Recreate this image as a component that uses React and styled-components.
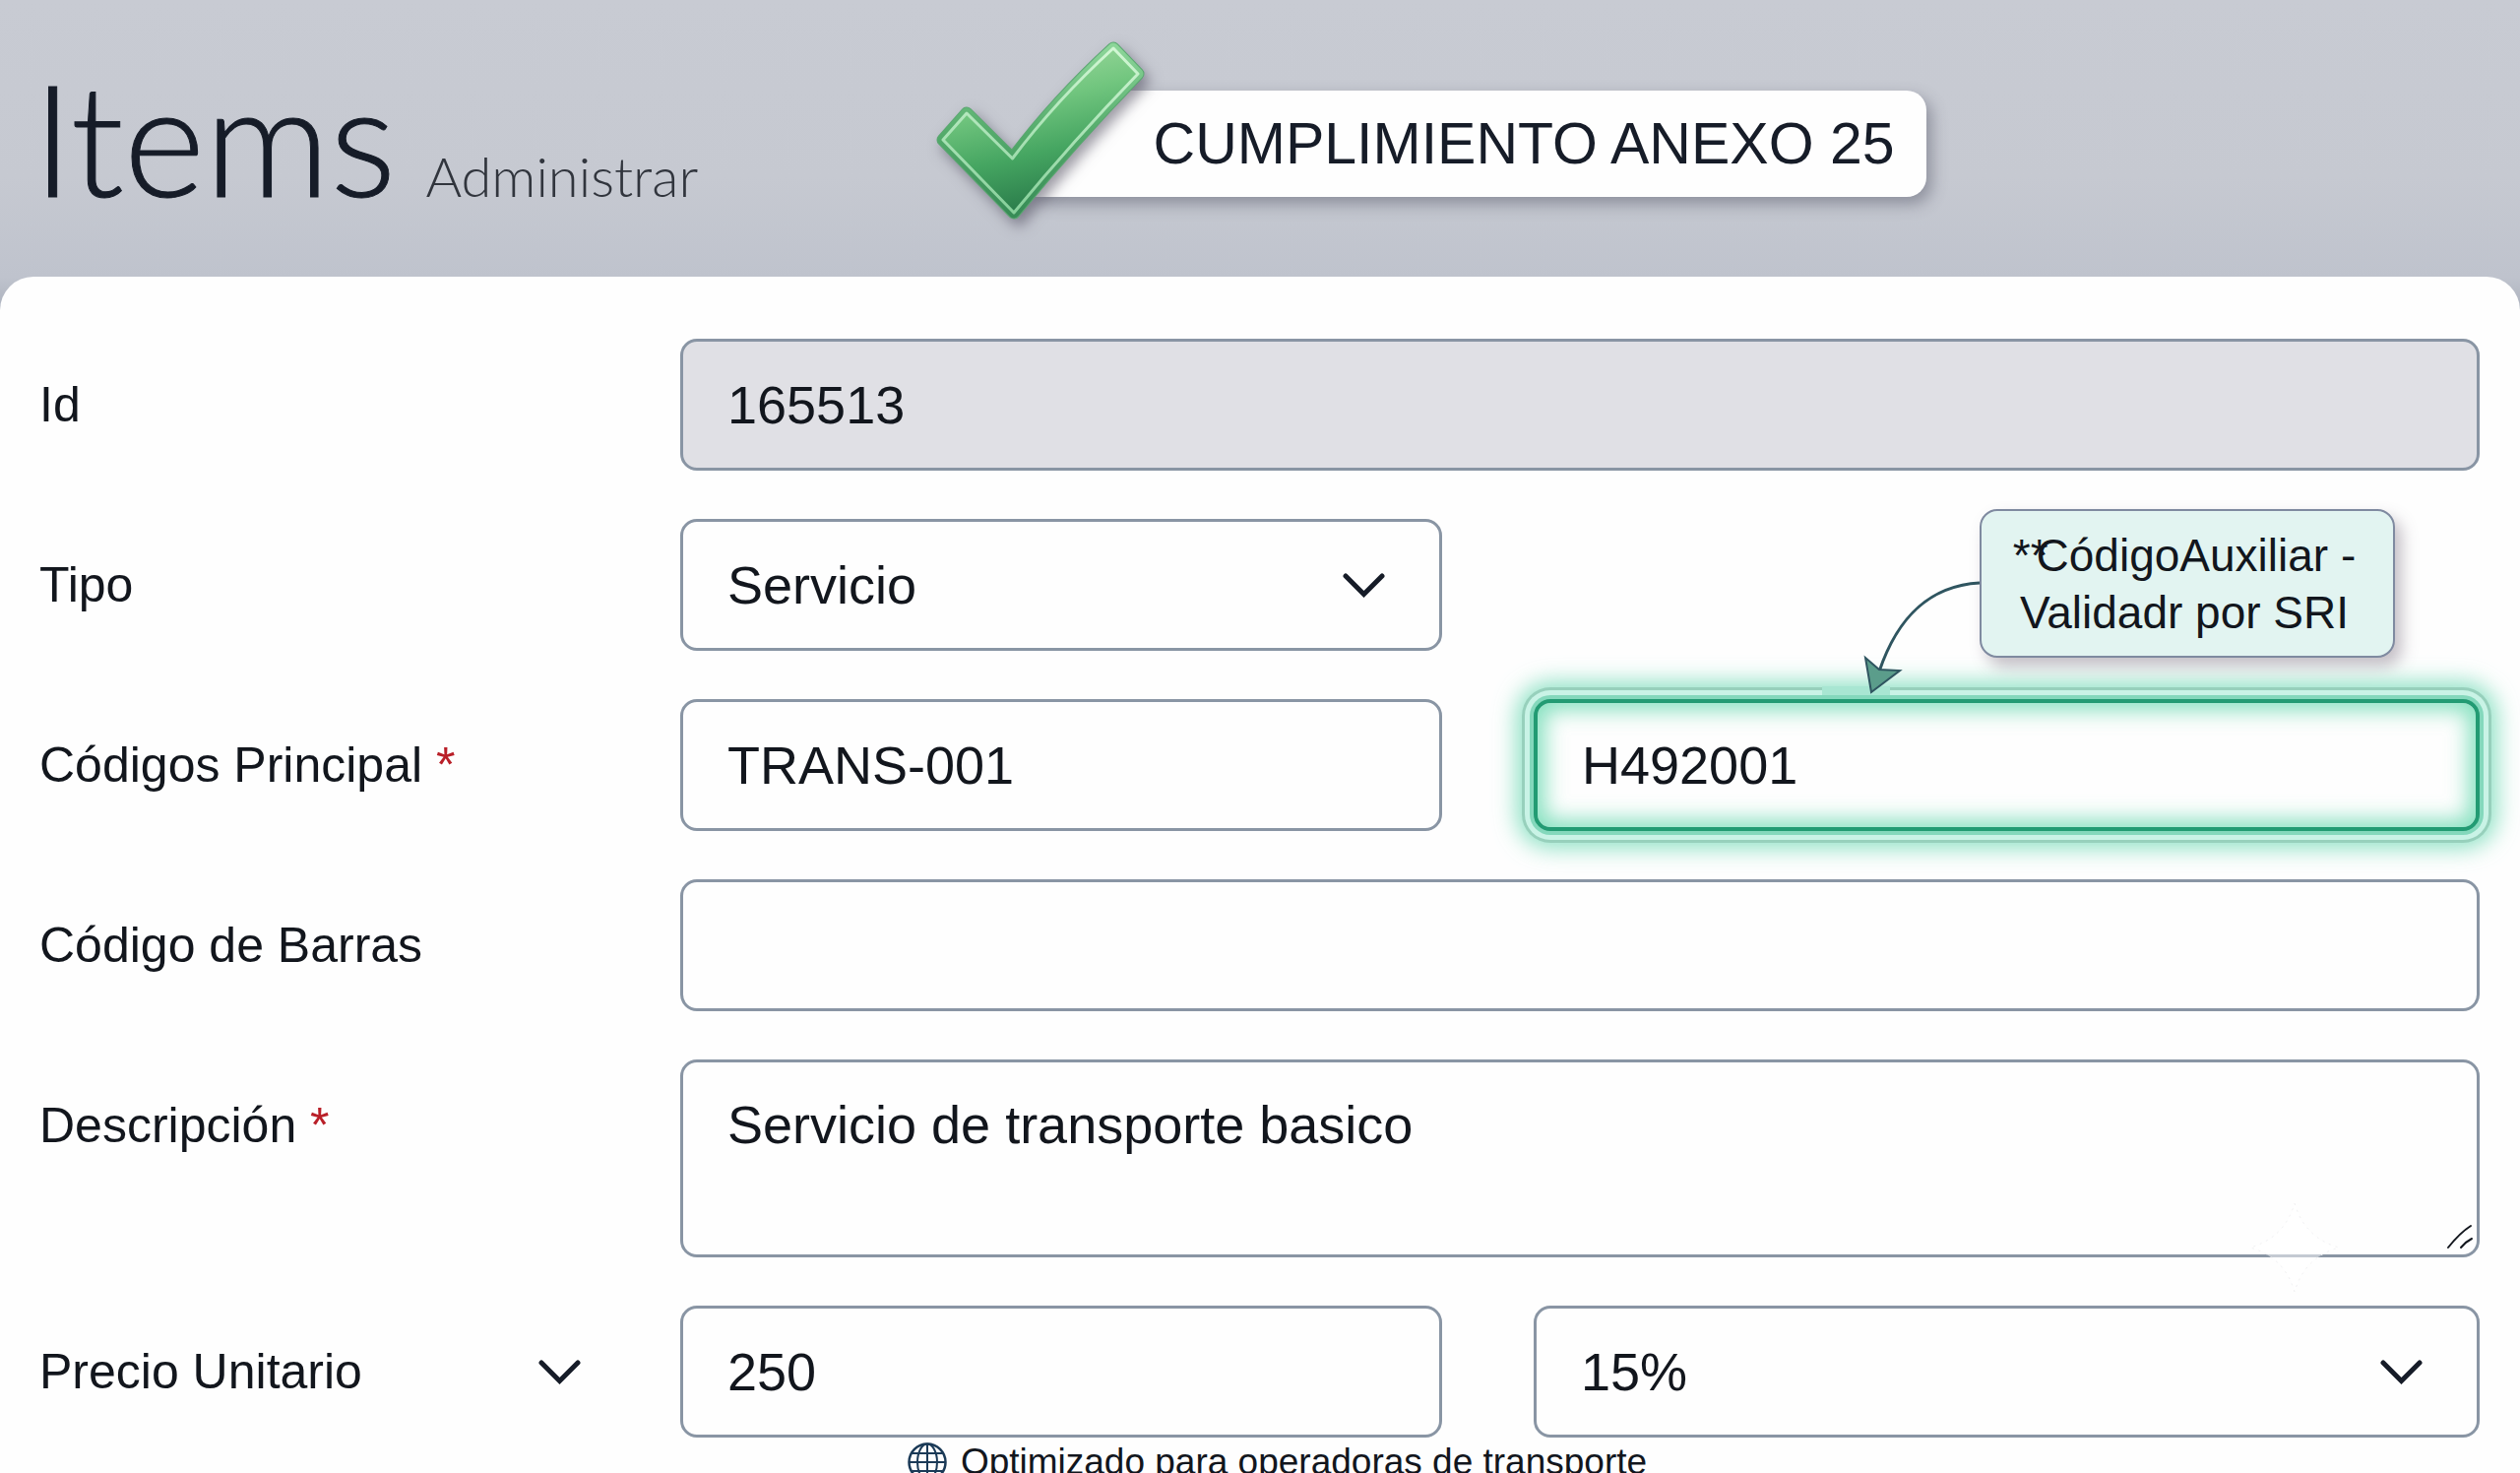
import React, { useState } from 'react'
import styled, { createGlobalStyle, css } from 'styled-components'

const colors = {
  ink: '#12161d',
  title: '#161c28',
  border: '#8995a4',
  required: '#b91f28',
  accent: '#229b73',
}

const GlobalStyle = createGlobalStyle`
  *, *::before, *::after {
    box-sizing: border-box;
  }
  body {
    margin: 0;
    color: ${colors.ink};
    font-family: 'Liberation Sans', Arial, sans-serif;
  }
`

const Page = styled.div`
  display: flex;
  flex-direction: column;
  height: 100vh;
  overflow: hidden;
  background: linear-gradient(#c8cbd3 0, #c6c9d1 180px, #bfc3cd 281px, #a9afbb 320px);
`

const Header = styled.header`
  display: flex;
  align-items: flex-start;
  padding: 92px 0 74px;
`

const Heading = styled.div`
  display: flex;
  flex: 0 0 41%;
  align-items: baseline;
  gap: 30px;
  padding-left: 33px;
  font-family: Lato, sans-serif;
  font-weight: 300;
`

const Title = styled.h1`
  margin: 0;
  color: ${colors.title};
  font-size: 158px;
  font-weight: 300;
  line-height: 94px;
  -webkit-text-stroke: 1px ${colors.title};
`

const Subtitle = styled.span`
  color: #31353d;
  font-size: 56px;
  line-height: 56px;
`

const Badge = styled.div`
  position: relative;
  padding: 0 32px 0 122px;
  border-radius: 60px 20px 20px 0;
  background: #fefefe;
  box-shadow: 5px 7px 16px rgba(70, 74, 90, 0.45);
  color: ${colors.title};
  font-size: 59px;
  line-height: 108px;
  white-space: nowrap;
`

const CheckDrawing = styled.svg`
  position: absolute;
  top: -57px;
  left: -105px;
  overflow: visible;
  filter: drop-shadow(5px 7px 7px rgba(60, 55, 75, 0.5));
`

const Card = styled.main`
  flex: 1 0 auto;
  padding: 63px 41px 0 40px;
  border-radius: 34px 34px 0 0;
  background: #fefefe;
`

const Form = styled.form`
  display: grid;
  gap: 49px;
`

const Row = styled.div`
  display: grid;
  grid-template-columns: 558fr 774fr 961fr;
  column-gap: 93px;
`

const LabelCell = styled.div`
  display: flex;
  align-items: center;
  justify-content: space-between;
  height: 134px;
  padding-right: 8px;
`

const Label = styled.label`
  font-size: 50px;
  line-height: 60px;
  white-space: nowrap;
`

const Required = styled.span`
  color: ${colors.required};
`

const IconButton = styled.button`
  display: flex;
  padding: 0;
  border: 0;
  background: none;
  color: ${colors.title};
`

const Field = styled.div`
  position: relative;
  display: flex;
  grid-column: ${props => (props.$wide ? 'span 2' : 'auto')};
`

const control = css`
  width: 100%;
  margin: 0;
  border: 3px solid ${colors.border};
  border-radius: 17px;
  outline: none;
  background: #fefefe;
  color: ${colors.ink};
  font-family: inherit;
  font-size: 54px;
`

const Input = styled.input`
  ${control}
  height: 134px;
  padding: 0 45px;
  ${props =>
    props.readOnly &&
    css`
      background: #e0e0e5;
    `}
  ${props =>
    props.$highlighted &&
    css`
      border: 4px solid ${colors.accent};
      box-shadow:
        0 0 0 4px #84d8bc,
        0 0 0 9px #c9f3e6,
        0 0 0 12px #97d0bc,
        0 0 22px 18px rgba(110, 218, 180, 0.75),
        inset 0 0 22px 7px rgba(90, 214, 168, 0.75);
    `}
`

const Select = styled.select`
  ${control}
  height: 134px;
  padding: 0 110px 0 45px;
  appearance: none;
`

const TextArea = styled.textarea`
  ${control}
  height: 201px;
  padding: 32px 45px;
  line-height: 62px;
  resize: none;
`

const SelectArrow = styled.span`
  position: absolute;
  top: 0;
  right: 58px;
  bottom: 0;
  display: flex;
  align-items: center;
  color: ${colors.title};
  pointer-events: none;
`

const ResizeGrip = styled.svg`
  position: absolute;
  right: 6px;
  bottom: 8px;
  pointer-events: none;
`

const Sparkle = styled.svg`
  position: absolute;
  right: 142px;
  bottom: -36px;
  pointer-events: none;
`

const Callout = styled.div`
  position: absolute;
  right: 86px;
  bottom: calc(100% + 42px);
  display: flex;
  align-items: flex-start;
  height: 151px;
`

const CalloutArrow = styled.svg`
  flex: none;
  overflow: visible;
`

const Bubble = styled.div`
  width: 422px;
  height: 151px;
  padding: 16px 6px 16px 0;
  border: 2px solid #7f8aa0;
  border-radius: 18px;
  background: #e2f4f1;
  box-shadow: 7px 9px 16px rgba(90, 75, 95, 0.35);
  font-size: 46px;
  line-height: 58px;
  text-align: center;
  white-space: nowrap;
`

const Stars = styled.span`
  margin-right: -12px;
`

const Footer = styled.footer`
  display: flex;
  align-items: center;
  justify-content: center;
  gap: 14px;
  padding: 5px 0 0 36px;
  font-size: 37px;
  line-height: 40px;
`

const Chevron = () => (
  <svg width="43" height="25" viewBox="0 0 43 25" aria-hidden="true">
    <path
      d="M3 3 21.5 21.5 40 3"
      fill="none"
      stroke="currentColor"
      strokeWidth="5"
      strokeLinecap="round"
    />
  </svg>
)

const checkPath =
  'M186 14 211 40Q145 108 85 181L13 107 37 80 83.5 126Q128 67 186 14Z'

const Check = () => (
  <CheckDrawing width="226" height="196" viewBox="0 0 226 196" aria-hidden="true">
    <defs>
      <linearGradient id="fill" gradientUnits="userSpaceOnUse" x1="70" y1="10" x2="110" y2="185">
        <stop offset="0" stopColor="#a5dda3" />
        <stop offset="0.35" stopColor="#72c67f" />
        <stop offset="0.65" stopColor="#45a561" />
        <stop offset="1" stopColor="#267547" />
      </linearGradient>
      <linearGradient id="edge" x1="0" y1="0" x2="0" y2="1">
        <stop offset="0" stopColor="#8bd598" />
        <stop offset="0.5" stopColor="#55ac6c" />
        <stop offset="1" stopColor="#388c57" />
      </linearGradient>
      <linearGradient id="shine" x1="0" y1="0" x2="0" y2="1">
        <stop offset="0" stopColor="#d2f7d4" />
        <stop offset="1" stopColor="#86cf9a" />
      </linearGradient>
    </defs>
    <path d={checkPath} fill="none" stroke="#5aa670" strokeWidth="13" strokeLinejoin="round" />
    <path d={checkPath} fill="none" stroke="url(#edge)" strokeWidth="11" strokeLinejoin="round" />
    <path
      d={checkPath}
      fill="url(#fill)"
      stroke="url(#shine)"
      strokeWidth="3"
      strokeLinejoin="round"
    />
  </CheckDrawing>
)

const Globe = () => (
  <svg width="40" height="40" viewBox="0 0 40 40" aria-hidden="true">
    <g fill="none" stroke="#1b3a57" strokeWidth="2">
      <circle cx="20" cy="20" r="18.5" strokeWidth="2.5" />
      <ellipse cx="20" cy="20" rx="10" ry="18.5" />
      <path d="M20 1v38M1 20h38M4.5 11h31M4.5 29h31" />
    </g>
  </svg>
)

const FieldLabel = ({ id, required, children, action }) => (
  <LabelCell>
    <Label htmlFor={id}>
      {children}
      {required && <Required> *</Required>}
    </Label>
    {action}
  </LabelCell>
)

const Dropdown = ({ options, ...rest }) => (
  <>
    <Select {...rest}>
      {options.map(option => (
        <option key={option}>{option}</option>
      ))}
    </Select>
    <SelectArrow>
      <Chevron />
    </SelectArrow>
  </>
)

const AuxiliaryCallout = () => (
  <Callout>
    <CalloutArrow width="171" height="190" viewBox="0 0 171 190" aria-hidden="true">
      <rect x="11" y="180" width="69" height="9" fill="#a8e6d2" />
      <path d="M171 75C118 78 87 112 69 165" fill="none" stroke="#2f5560" strokeWidth="3" />
      <path d="M55 151 69 163 90 164 61 186Z" fill="#5b9d8b" stroke="#2f5560" strokeWidth="2" />
    </CalloutArrow>
    <Bubble id="auxiliar-nota">
      <Stars>**</Stars>CódigoAuxiliar -<br />
      Validadr por SRI
    </Bubble>
  </Callout>
)

export default function App() {
  const [item, setItem] = useState({
    tipo: 'Servicio',
    principal: 'TRANS-001',
    auxiliar: 'H492001',
    barras: '',
    descripcion: 'Servicio de transporte basico',
    precio: '250',
    iva: '15%',
  })

  const bind = name => ({
    id: name,
    value: item[name],
    onChange: e => setItem({ ...item, [name]: e.target.value }),
  })

  return (
    <Page>
      <GlobalStyle />
      <Header>
        <Heading>
          <Title>Items</Title>
          <Subtitle>Administrar</Subtitle>
        </Heading>
        <Badge>
          <Check />
          CUMPLIMIENTO ANEXO 25
        </Badge>
      </Header>
      <Card>
        <Form>
          <Row>
            <FieldLabel id="id">Id</FieldLabel>
            <Field $wide>
              <Input id="id" value="165513" readOnly />
            </Field>
          </Row>
          <Row>
            <FieldLabel id="tipo">Tipo</FieldLabel>
            <Field>
              <Dropdown {...bind('tipo')} options={['Servicio', 'Producto']} />
            </Field>
          </Row>
          <Row>
            <FieldLabel id="principal" required>
              Códigos Principal
            </FieldLabel>
            <Field>
              <Input {...bind('principal')} />
            </Field>
            <Field>
              <Input {...bind('auxiliar')} $highlighted aria-labelledby="auxiliar-nota" />
              <AuxiliaryCallout />
            </Field>
          </Row>
          <Row>
            <FieldLabel id="barras">Código de Barras</FieldLabel>
            <Field $wide>
              <Input {...bind('barras')} />
            </Field>
          </Row>
          <Row>
            <FieldLabel id="descripcion" required>
              Descripción
            </FieldLabel>
            <Field $wide>
              <TextArea {...bind('descripcion')} />
              <ResizeGrip width="28" height="26" viewBox="0 0 28 26" aria-hidden="true">
                <path
                  d="M2 24Q14 9 25 2M15 24Q20 18 26 15"
                  fill="none"
                  stroke="#12161d"
                  strokeWidth="2"
                  strokeLinecap="round"
                />
              </ResizeGrip>
              <Sparkle width="92" height="92" viewBox="0 0 92 92" aria-hidden="true">
                <path
                  d="M46 1Q56 36 91 46 56 56 46 91 36 56 1 46 36 36 46 1Z"
                  fill="#fff"
                  fillOpacity="0.5"
                  stroke="#f0f0f2"
                  strokeDasharray="2 5"
                />
              </Sparkle>
            </Field>
          </Row>
          <Row>
            <FieldLabel
              id="precio"
              action={
                <IconButton type="button" aria-label="Opciones de precio">
                  <Chevron />
                </IconButton>
              }
            >
              Precio Unitario
            </FieldLabel>
            <Field>
              <Input {...bind('precio')} />
            </Field>
            <Field>
              <Dropdown {...bind('iva')} options={['15%', '0%']} aria-label="IVA" />
            </Field>
          </Row>
        </Form>
        <Footer>
          <Globe />
          Optimizado para operadoras de transporte
        </Footer>
      </Card>
    </Page>
  )
}
